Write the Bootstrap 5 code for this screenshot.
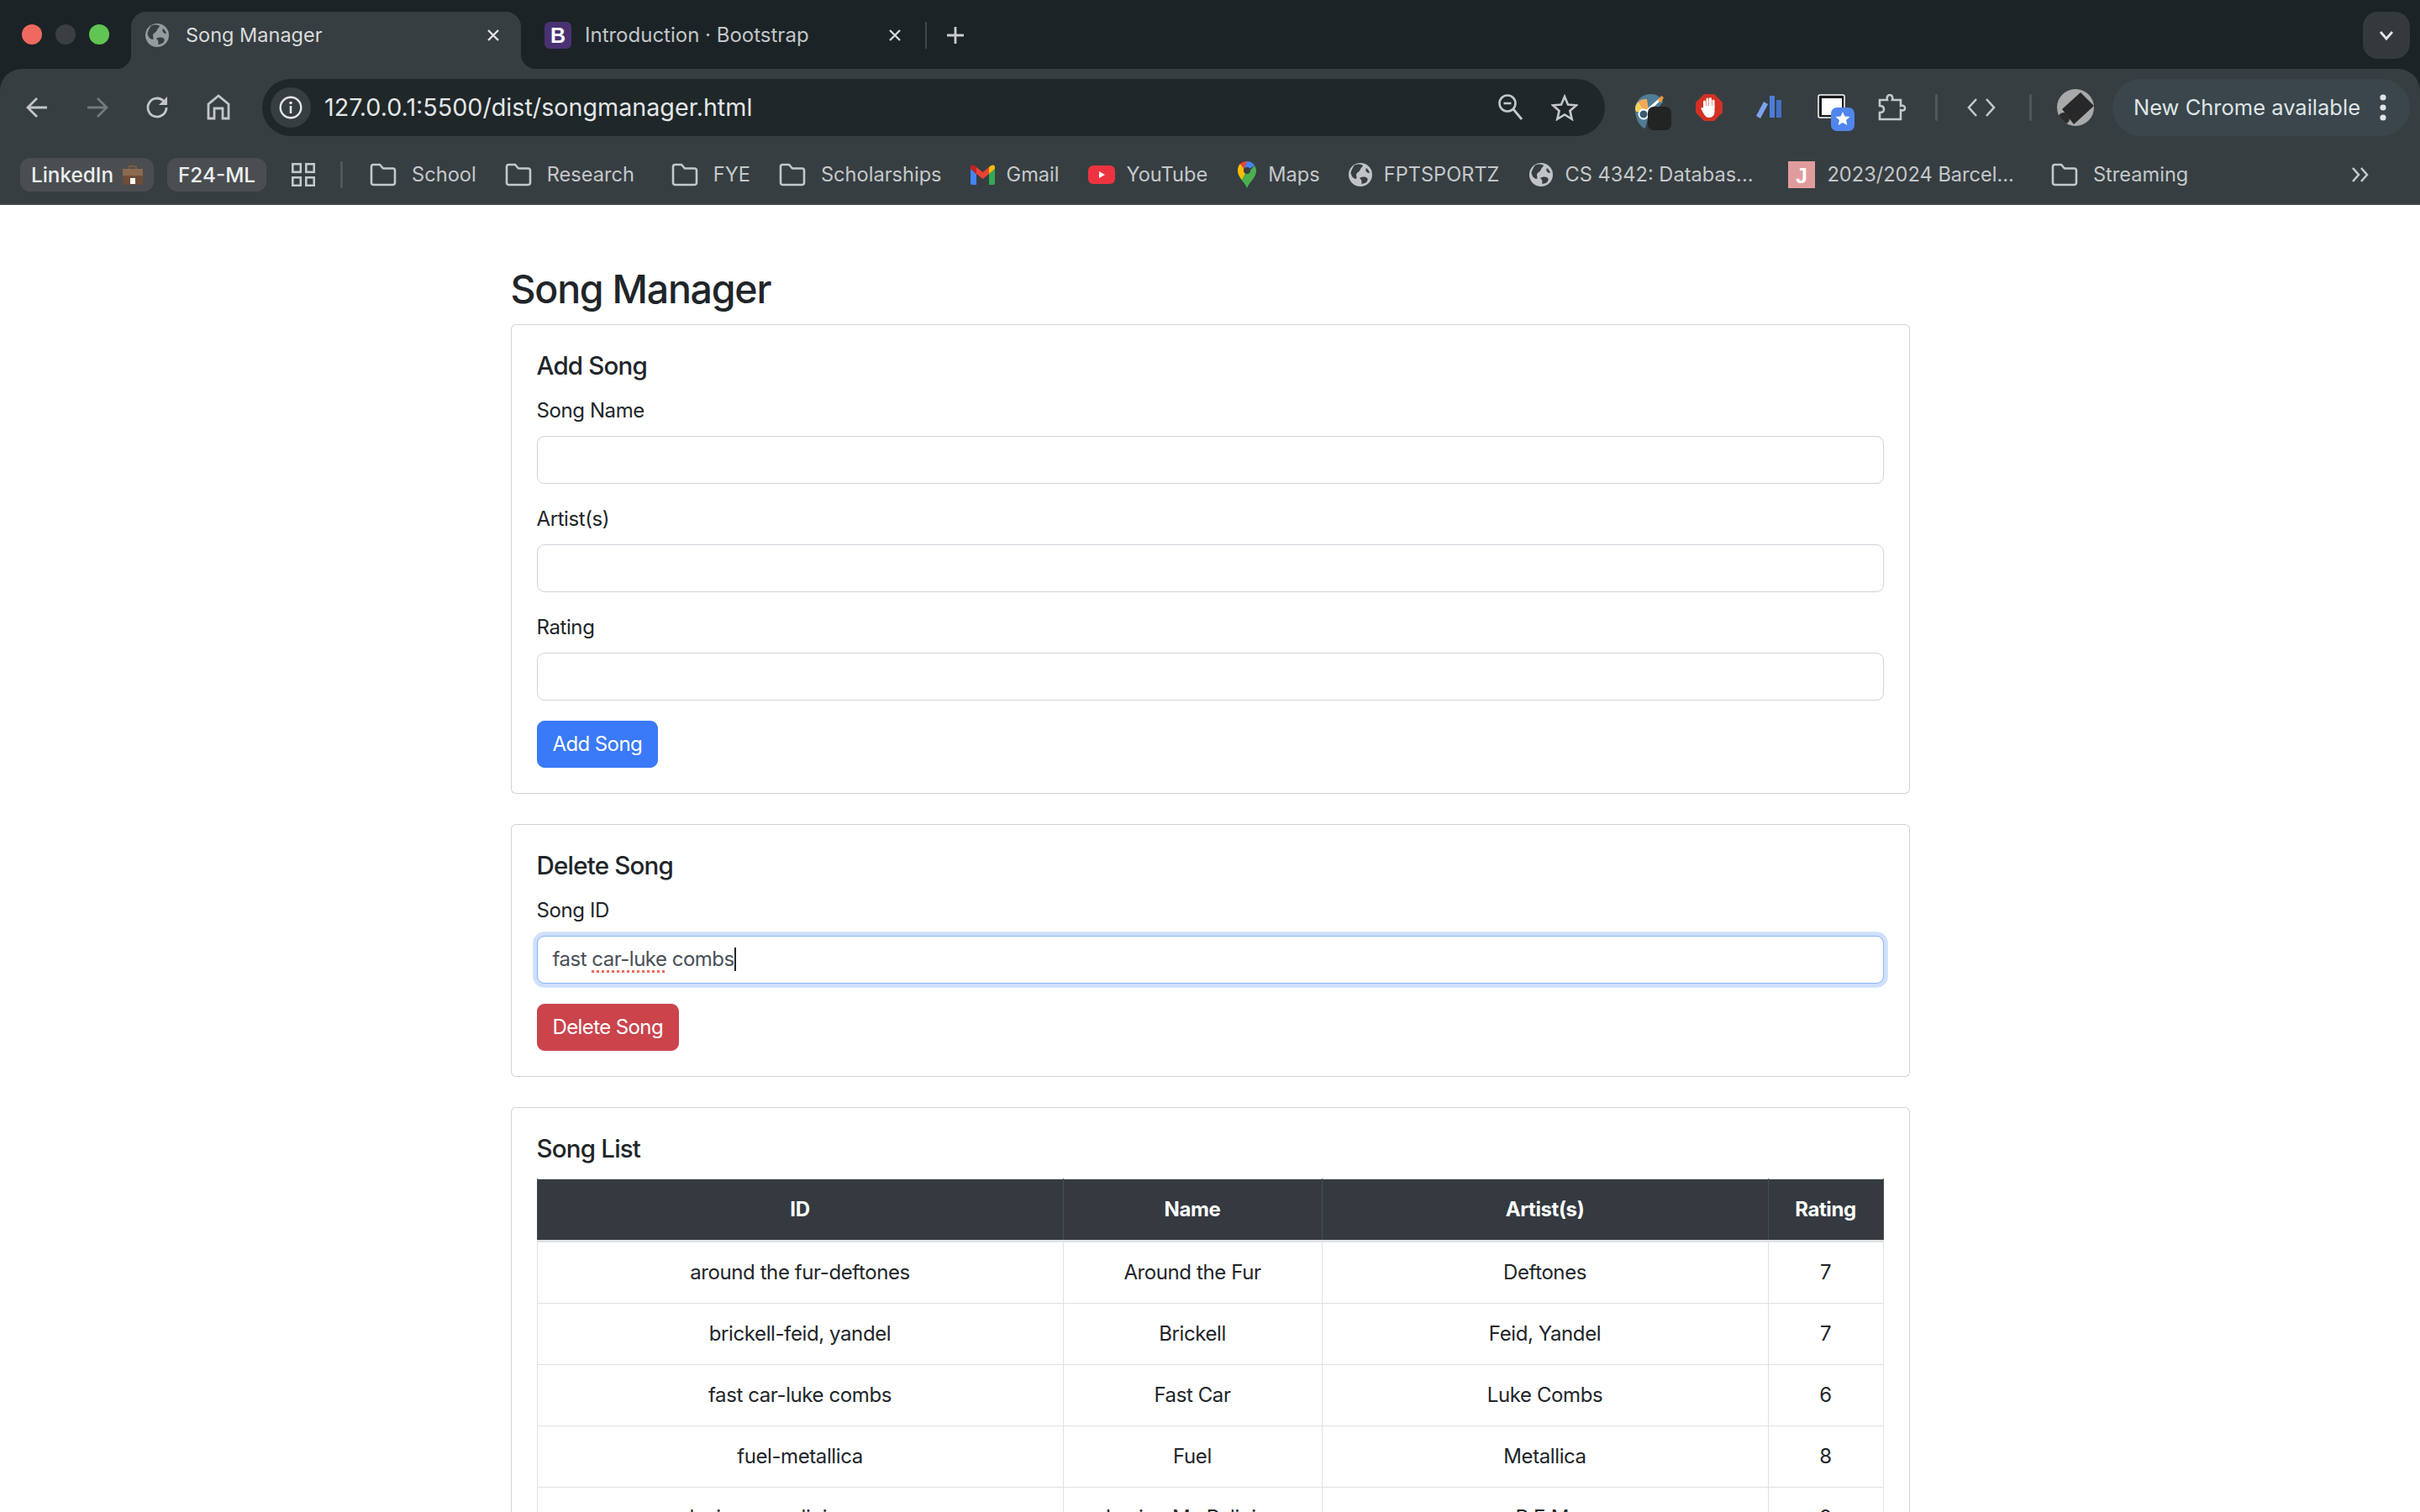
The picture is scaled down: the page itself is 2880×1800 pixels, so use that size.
<!DOCTYPE html>
<html lang="en">
<head>
<meta charset="utf-8">
<title>Song Manager</title>
<link href="https://cdn.jsdelivr.net/npm/bootstrap@5.3.0/dist/css/bootstrap.min.css" rel="stylesheet">
<style>
:root{--bs-border-radius:6px;--bs-body-color:#212529;--bs-body-font-family:"Inter","Liberation Sans",sans-serif;--bs-border-color:#dee2e6}
html{font-size:24px}
body{font-family:"Inter","Liberation Sans",sans-serif;height:1800px;width:2880px}
/* browser chrome */
.shell{height:244px;background:#1c2326;color:#c7cbcd;font-size:23.5px;flex:none;letter-spacing:0}
.tabstrip{height:82px;padding-top:14px}
.lights{width:156px;height:54px;gap:16px;padding-left:26px}
.light{width:24px;height:24px;border-radius:50%}
.lightred{background:#ef6a5e}.lightgrey{background:#3a3f42}.lightgreen{background:#61c554}
.tabitem{position:relative;height:68px;width:464px;padding:0 24px 12px 17px;border-radius:18px 18px 0 0;gap:20px}
.tabitem.active-tab{background:#373e41;color:#d9dcde}
.tabitem.active-tab::before,.tabitem.active-tab::after{content:"";position:absolute;bottom:0;width:18px;height:18px}
.tabitem.active-tab::before{left:-18px;background:radial-gradient(circle at 0 0,transparent 18px,#373e41 18.5px)}
.tabitem.active-tab::after{right:-18px;background:radial-gradient(circle at 100% 0,transparent 18px,#373e41 18.5px)}
.tabitem.second{margin-left:8px;width:474px;color:#c2c6c8;gap:16px;padding-left:20px;padding-right:28px;font-size:24px}
.tabtitle{flex:1;white-space:nowrap}
.tabsep{width:2px;height:32px;background:#3f4649;margin:0 0 12px -1px}
.plusbtn{width:24px;height:24px;margin:0 0 12px 22px}
.morebtn{width:56px;height:56px;background:#33393c;border-radius:18px;margin:0 12px 12px auto}
.toolbar{height:162px;background:#373e41;border-radius:26px 26px 0 0;border-bottom:2px solid #3f4649}
.navline{height:80px;padding:12px 12px 0 0}
.navicons{width:312px;gap:32px;padding-left:24px}
.navicons svg{width:40px;height:40px;flex:none}
.omni{width:1598px;height:68px;background:#1f2729;border-radius:34px;padding:0 32px 0 10px;color:#e4e6e8;font-size:28.7px;flex:none}
.infodot{width:48px;height:48px;border-radius:50%;background:#373e41;margin-right:16px}
.omnitail{gap:32px;margin-left:auto}
.exts{height:68px;margin-left:23px;flex:none}
.slotw{flex:none;height:68px}
.w70{width:70px}.w62{width:62px}.w82{width:82px}.w76{width:76px}.w58{width:58px}.w46{width:46px}.w54{width:54px}
.lowered{padding-top:12px}
.tsep{width:3px;height:32px;background:#50575a;border-radius:2px;flex:none}
.pill{width:354px;height:68px;background:#3a464c;border-radius:34px;padding:0 28px 0 25px;color:#dfe4e6;font-size:25.5px;white-space:nowrap;margin-left:auto;flex:none}
.bookbar{height:80px;padding:22px 0 10px 24px;font-size:23.6px;white-space:nowrap}
.chip{height:40px;background:#4a4e51;border-radius:12px;color:#eceeef;font-weight:500;font-size:24.3px;padding:0 13px;gap:11px;margin-right:16px}
.bmark{gap:14px;margin-right:34px;color:#c4c8ca}
.bmark svg{flex:none}
.bmark.folderitem{gap:18px}
.gapwide{margin-right:44px}.gaplarge{margin-right:44px}.gapmid{margin-right:36px}.gapfar{margin-right:42px}
.gridicon{margin-left:14px}
.barsep{width:3px;height:32px;background:#50575a;margin:0 32px 0 30px}
.bmore{margin-left:auto;margin-right:60px}
/* page */
.pagebody{flex:1;overflow:hidden;background:#fff;letter-spacing:-.4px}
.songwrap{max-width:1710px;padding:72px 22.5px 0}
.pagetitle{font-size:46.5px;font-weight:500;line-height:57.6px;margin-bottom:.5rem;letter-spacing:-1.25px}
.panel{margin-bottom:1.5rem;--bs-card-spacer-y:1.25rem;--bs-card-spacer-x:1.25rem}
.panel .card-title{font-size:29.5px;font-weight:500;line-height:36px;margin-bottom:.75rem;letter-spacing:-.8px}
.panel .form-label{margin-bottom:.5rem}
.fieldbox{margin-bottom:1rem}
.panel .form-control{height:57px;padding:.375rem .75rem;color:#495057;border-color:#ced4da}
.focusfield{border-color:#85b7fb!important;box-shadow:0 0 0 4.8px #cfe0fc;white-space:nowrap;letter-spacing:-.5px}
.misspelt{text-decoration:underline dotted #ec6a5e 3px;text-underline-offset:5px;text-decoration-skip-ink:none}
.caretbar{display:inline-block;width:2px;height:28px;background:#212529;vertical-align:-6px}
.addbtn{--bs-btn-bg:#3a79f7;--bs-btn-border-color:#3a79f7;--bs-btn-padding-y:.375rem;--bs-btn-padding-x:.75rem;--bs-btn-font-size:1rem;--bs-btn-color:#fff;letter-spacing:-.6px}
.delbtn{--bs-btn-bg:#cb444c;--bs-btn-border-color:#cb444c;--bs-btn-padding-y:.375rem;--bs-btn-padding-x:.75rem;--bs-btn-font-size:1rem;--bs-btn-color:#fff;letter-spacing:-.6px}
.songtable{table-layout:fixed;margin-bottom:0}
.songtable>:not(caption)>*>*{padding:.75rem}
.songtable>thead>tr>th{--bs-table-bg:#343a40;background:#343a40;color:#fff;border-color:#454d55;border-bottom:3px solid #dee2e6;font-weight:700}
.colid{width:626px}.colname{width:308px}.colartist{width:531px}
</style>
</head>
<body class="d-flex flex-column overflow-hidden">
<svg width="0" height="0" class="position-absolute">
  <defs>
    <symbol id="globe" viewBox="0 0 28 28"><circle cx="14" cy="14" r="14" fill="currentColor"/><path d="M7 2.500c4-1.500 8-1 10 .5-.5 2-2.500 2.500-3 4.500-.5 2.500-3 3-4.500 5-1.500 2.500 1 4-.5 6.500C6 19 3 16 2.500 11.500 3.500 8 5 5 7 2.500zM13 18c3-2 6.500-2 8.500-.5 2 1.500 1 4-.5 5.500-2 1.500-4 2-6 1.500 1-2 .5-4.500-2-6.500zM21 6c2 1.500 3.500 3.500 4 6-2 .5-3.500-1-4.500-2.500-.5-1.500 0-2.500.5-3.500z" fill="#373e41"/></symbol>
    <symbol id="folder" viewBox="0 0 32 28"><path d="M2 4.500A2.500 2.500 0 0 1 4.500 2h7.500l4 4.500h11.500A2.500 2.500 0 0 1 30 9v14.500a2.500 2.500 0 0 1-2.500 2.500h-23A2.500 2.500 0 0 1 2 23.500z" fill="none" stroke="currentColor" stroke-width="2.600"/></symbol>
  </defs>
</svg>
<header class="shell">
  <div class="tabstrip d-flex align-items-start">
    <div class="lights d-flex align-items-center">
      <span class="light lightred"></span><span class="light lightgrey"></span><span class="light lightgreen"></span>
    </div>
    <div class="tabitem active-tab d-flex align-items-center">
      <svg width="28" height="28" color="#959b9f"><use href="#globe"/></svg>
      <span class="tabtitle">Song Manager</span>
      <svg width="18" height="18" viewBox="0 0 18 18"><path d="M3 3l12 12M15 3L3 15" stroke="#e2e4e6" stroke-width="2.400"/></svg>
    </div>
    <div class="tabitem second d-flex align-items-center">
      <svg width="32" height="32" viewBox="0 0 32 32"><rect width="32" height="32" rx="6" fill="#4a3272"/><text x="16" y="25" text-anchor="middle" font-family="Liberation Sans,sans-serif" font-size="25" font-weight="700" fill="#fff">B</text></svg>
      <span class="tabtitle">Introduction · Bootstrap</span>
      <svg width="18" height="18" viewBox="0 0 18 18"><path d="M3 3l12 12M15 3L3 15" stroke="#d5d8da" stroke-width="2.400"/></svg>
    </div>
    <span class="tabsep align-self-center"></span>
    <svg class="plusbtn align-self-center" viewBox="0 0 24 24"><path d="M12 2v20M2 12h20" stroke="#c9cdcf" stroke-width="2.800"/></svg>
    <div class="morebtn d-flex align-items-center justify-content-center"><svg width="20" height="14" viewBox="0 0 20 14"><path d="M3 3l7 8 7-8" fill="none" stroke="#e2e4e6" stroke-width="2.800"/></svg></div>
  </div>
  <div class="toolbar">
    <div class="navline d-flex">
      <div class="navicons d-flex align-items-center">
        <svg viewBox="0 0 40 40"><path d="M32 20H10M20 9L9 20l11 11" fill="none" stroke="#c2c6c8" stroke-width="2.800"/></svg>
        <svg viewBox="0 0 40 40"><path d="M8 20h22M20 9l11 11-11 11" fill="none" stroke="#73797c" stroke-width="2.800"/></svg>
        <svg viewBox="0 0 40 40"><path d="M30 20a11 11 0 1 1-3.500-8" fill="none" stroke="#c2c6c8" stroke-width="2.800"/><path d="M31 7v10H21" fill="#c2c6c8"/></svg>
        <svg viewBox="0 0 40 40"><path d="M8 33V16L20 6l12 10v17h-7V21H15v12z" fill="none" stroke="#c2c6c8" stroke-width="2.800"/></svg>
      </div>
      <div class="omni d-flex align-items-center">
        <span class="infodot d-flex align-items-center justify-content-center"><svg width="28" height="28" viewBox="0 0 28 28"><circle cx="14" cy="14" r="12.300" fill="none" stroke="#e4e6e8" stroke-width="2.400"/><circle cx="14" cy="8.500" r="1.800" fill="#e4e6e8"/><path d="M14 12v9" stroke="#e4e6e8" stroke-width="2.600"/></svg></span>
        <span>127.0.0.1:5500/dist/songmanager.html</span>
        <span class="omnitail d-flex align-items-center">
          <svg width="32" height="34" viewBox="0 0 32 34"><circle cx="12" cy="12" r="9.500" fill="none" stroke="#c4c8ca" stroke-width="2.600"/><path d="M7.500 12h9" stroke="#c4c8ca" stroke-width="2.600"/><path d="M19 19l10 12" stroke="#c4c8ca" stroke-width="2.800"/></svg>
          <svg width="32" height="32" viewBox="0 0 32 32"><path d="M16 3l4 9.500 10 .8-7.600 6.600 2.300 9.900L16 24.500l-8.700 5.300 2.300-9.900L2 13.300l10-.8z" fill="none" stroke="#c4c8ca" stroke-width="2.600"/></svg>
        </span>
      </div>
      <div class="exts d-flex align-items-center">
        <span class="slotw w70 lowered d-flex align-items-center justify-content-center">
          <svg width="46" height="46" viewBox="0 0 46 46"><path d="M1 19C1 9 9 1 19 1c8 0 13 3 15 10L16 30l-3 12C6 40 1 30 1 19z" fill="#4f7c96"/><path d="M1 19c0-5 2-7 4-9l8 12H2z" fill="#f5d45e"/><path d="M5 10c3-3 6-3 10-3l2 13-4 2z" fill="#f4a857"/><circle cx="11" cy="25" r="5.500" fill="#375a70" stroke="#fff" stroke-width="2"/><path d="M15 21L31 7" stroke="#fff" stroke-width="3"/><path d="M28 9l4-6 3 2-3 6z" fill="#f09a3e"/><rect x="16" y="16" width="28" height="28" rx="7" fill="#222423"/></svg>
        </span>
        <span class="slotw w62 d-flex align-items-center justify-content-center">
          <svg width="32" height="32" viewBox="0 0 32 32"><path d="M10 0h12l10 10v12L22 32H10L0 22V10z" fill="#d33123"/><path d="M10.500 16V9M14 15V6M17.500 15V5.500M21 15.500V8" stroke="#fff" stroke-width="3" stroke-linecap="round"/><path d="M9 14h13.500v7c0 4-2.500 7-6.500 7-3 0-4.500-1.500-6-4l-3.500-6c-.8-1.500 1.500-2.800 2.500-1.500z" fill="#fff"/></svg>
        </span>
        <span class="slotw w82 d-flex align-items-center justify-content-center">
          <svg width="32" height="28" viewBox="0 0 32 28"><path d="M0 24L9 7l5 3-9 17z" fill="#7ea2ef"/><rect x="16" y="0" width="6" height="26" fill="#4d7cdc"/><rect x="24" y="5" width="6" height="21" fill="#4470c4"/></svg>
        </span>
        <span class="slotw w76 lowered d-flex align-items-center justify-content-center">
          <svg width="44" height="44" viewBox="0 0 44 44"><rect x="1" y="1" width="31" height="27" rx="2" fill="#1b1b1b" stroke="#fff" stroke-width="1.500"/><rect x="5" y="5" width="24" height="20" fill="#fff"/><rect x="16" y="16" width="28" height="28" rx="7" fill="#5086ec"/><path d="M30 21l2.500 5.500 6 .6-4.500 4 1.300 6L30 34l-5.300 3.100 1.300-6-4.500-4 6-.6z" fill="#fff"/></svg>
        </span>
        <span class="slotw w58 d-flex align-items-center justify-content-center">
          <svg width="34" height="32" viewBox="0 0 34 32"><path d="M2 7h9c-1-4 1-6 3-6s4 2 3 6h10v7c4-1 5 1 5 3s-1 3-5 2v11H2v-8c3 0 5-1 5-4s-2-4-5-4z" fill="none" stroke="#c4c8ca" stroke-width="2.600"/></svg>
        </span>
        <span class="slotw w46 d-flex align-items-center justify-content-center"><span class="tsep"></span></span>
        <span class="slotw w62 d-flex align-items-center justify-content-center"><svg width="36" height="26" viewBox="0 0 36 26"><path d="M12 3L3 13l9 10M24 3l9 10-9 10" fill="none" stroke="#c4c8ca" stroke-width="2.600"/></svg></span>
        <span class="slotw w54 d-flex align-items-center justify-content-center"><span class="tsep"></span></span>
        <span class="slotw w54 d-flex align-items-center justify-content-center"><svg width="44" height="44" viewBox="0 0 44 44"><defs><clipPath id="avc"><circle cx="22" cy="22" r="22"/></clipPath></defs><g clip-path="url(#avc)"><rect width="44" height="44" fill="#a9a9a9"/><path d="M6 24L28 4l16 16-24 22z" fill="#26282a"/><circle cx="8" cy="35" r="7" fill="#2c2c2c"/></g></svg></span>
      </div>
      <div class="pill d-flex align-items-center justify-content-between">
        <span>New Chrome available</span>
        <svg width="8" height="32" viewBox="0 0 8 32"><circle cx="4" cy="4" r="3.600" fill="#dfe4e6"/><circle cx="4" cy="16" r="3.600" fill="#dfe4e6"/><circle cx="4" cy="28" r="3.600" fill="#dfe4e6"/></svg>
      </div>
    </div>
    <div class="bookbar d-flex align-items-center">
      <span class="chip d-flex align-items-center">LinkedIn
        <svg width="24" height="24" viewBox="0 0 24 24"><path d="M8 5V2h8v3" fill="none" stroke="#7a5a42" stroke-width="2"/><rect y="5" width="24" height="19" rx="2" fill="#6d4c38"/><rect y="5" width="24" height="8" fill="#8b6a50"/><rect x="9" y="16" width="6" height="7" fill="#fff"/></svg>
      </span>
      <span class="chip d-flex align-items-center">F24-ML</span>
      <svg width="28" height="28" viewBox="0 0 28 28" class="gridicon"><g fill="none" stroke="#c4c8ca" stroke-width="2.600"><rect x="1.300" y="1.300" width="9.500" height="9.500"/><rect x="17.300" y="1.300" width="9.500" height="9.500"/><rect x="1.300" y="17.300" width="9.500" height="9.500"/><rect x="17.300" y="17.300" width="9.500" height="9.500"/></g></svg>
      <span class="barsep"></span>
      <span class="bmark folderitem d-flex align-items-center"><svg width="32" height="28" color="#c4c8ca"><use href="#folder"/></svg>School</span>
      <span class="bmark folderitem gapwide d-flex align-items-center"><svg width="32" height="28" color="#c4c8ca"><use href="#folder"/></svg>Research</span>
      <span class="bmark folderitem d-flex align-items-center"><svg width="32" height="28" color="#c4c8ca"><use href="#folder"/></svg>FYE</span>
      <span class="bmark folderitem d-flex align-items-center"><svg width="32" height="28" color="#c4c8ca"><use href="#folder"/></svg>Scholarships</span>
      <span class="bmark d-flex align-items-center"><svg width="29" height="24" viewBox="0 0 29 24"><path d="M0 5v17a2 2 0 0 0 2 2h5V11z" fill="#4285f4"/><path d="M22 11v13h5a2 2 0 0 0 2-2V5z" fill="#34a853"/><path d="M7 11l7.500 6L22 11V3l-7.500 6L7 3z" fill="#ea4335"/><path d="M22 3v8l7-6V3c0-3-3-3-4.500-2z" fill="#fbbc04"/><path d="M7 3v8L0 5V3c0-3 3-3 4.500-2z" fill="#c5221f"/></svg>Gmail</span>
      <span class="bmark gapmid d-flex align-items-center"><svg width="32" height="22" viewBox="0 0 32 22"><rect width="32" height="22" rx="6" fill="#ee3340"/><path d="M13 7l7 4-7 4z" fill="#fff"/></svg>YouTube</span>
      <span class="bmark d-flex align-items-center"><svg width="22" height="32" viewBox="0 0 22 32"><path d="M11 32C8 24 0 20 0 11c0-3 1-6 3-8l8 8z" fill="#34a853"/><path d="M11 32c3-8 11-12 11-21 0-2-1-4-2-6L5 22c2 3 5 5 6 10z" fill="#4caf50"/><path d="M0 11c0-3 1-6 3-8l8 8-6 11C2 18 0 15 0 11z" fill="#fbbc04"/><path d="M3 3a11 11 0 0 1 8-3l-1 8-2 2z" fill="#ea4335"/><path d="M11 0a11 11 0 0 1 9 5l-9 6-3-3z" fill="#4285f4"/><circle cx="11" cy="11" r="4" fill="#373e41"/></svg>Maps</span>
      <span class="bmark gapmid d-flex align-items-center"><svg width="28" height="28" color="#c0c4c6"><use href="#globe"/></svg>FPTSPORTZ</span>
      <span class="bmark gapfar d-flex align-items-center"><svg width="28" height="28" color="#c0c4c6"><use href="#globe"/></svg>CS 4342: Databas...</span>
      <span class="bmark gaplarge d-flex align-items-center"><svg width="32" height="32" viewBox="0 0 32 32"><rect width="32" height="32" fill="#e09c9c"/><text x="16" y="26" text-anchor="middle" font-family="Liberation Sans,sans-serif" font-size="25" font-weight="700" fill="#fff">J</text></svg>2023/2024 Barcel...</span>
      <span class="bmark folderitem d-flex align-items-center"><svg width="32" height="28" color="#c4c8ca"><use href="#folder"/></svg>Streaming</span>
      <svg class="bmore" width="22" height="20" viewBox="0 0 22 20"><path d="M2 2l7 8-7 8M12 2l7 8-7 8" fill="none" stroke="#c4c8ca" stroke-width="2.600"/></svg>
    </div>
  </div>
</header>
<main class="pagebody">
  <div class="container songwrap">
    <h2 class="pagetitle">Song Manager</h2>
    <div class="card panel">
      <div class="card-body">
        <h5 class="card-title">Add Song</h5>
        <form>
          <div class="fieldbox"><label class="form-label" for="songName">Song Name</label><input class="form-control" id="songName" type="text"></div>
          <div class="fieldbox"><label class="form-label" for="songArtist">Artist(s)</label><input class="form-control" id="songArtist" type="text"></div>
          <div class="fieldbox"><label class="form-label" for="songRating">Rating</label><input class="form-control" id="songRating" type="text"></div>
          <button type="button" class="btn btn-primary addbtn">Add Song</button>
        </form>
      </div>
    </div>
    <div class="card panel">
      <div class="card-body">
        <h5 class="card-title">Delete Song</h5>
        <form>
          <div class="fieldbox"><label class="form-label">Song ID</label><div class="form-control focusfield">fast <span class="misspelt">car-luke</span> combs<span class="caretbar"></span></div></div>
          <button type="button" class="btn btn-danger delbtn">Delete Song</button>
        </form>
      </div>
    </div>
    <div class="card panel">
      <div class="card-body">
        <h5 class="card-title">Song List</h5>
        <table class="table table-bordered text-center songtable">
          <thead><tr><th class="colid">ID</th><th class="colname">Name</th><th class="colartist">Artist(s)</th><th>Rating</th></tr></thead>
          <tbody>
            <tr><td>around the fur-deftones</td><td>Around the Fur</td><td>Deftones</td><td>7</td></tr>
            <tr><td>brickell-feid, yandel</td><td>Brickell</td><td>Feid, Yandel</td><td>7</td></tr>
            <tr><td>fast car-luke combs</td><td>Fast Car</td><td>Luke Combs</td><td>6</td></tr>
            <tr><td>fuel-metallica</td><td>Fuel</td><td>Metallica</td><td>8</td></tr>
            <tr><td>losing my religion-r.e.m.</td><td>Losing My Religion</td><td>R.E.M.</td><td>9</td></tr>
          </tbody>
        </table>
      </div>
    </div>
  </div>
</main>
<script src="https://cdn.jsdelivr.net/npm/bootstrap@5.3.0/dist/js/bootstrap.bundle.min.js"></script>
</body>
</html>
